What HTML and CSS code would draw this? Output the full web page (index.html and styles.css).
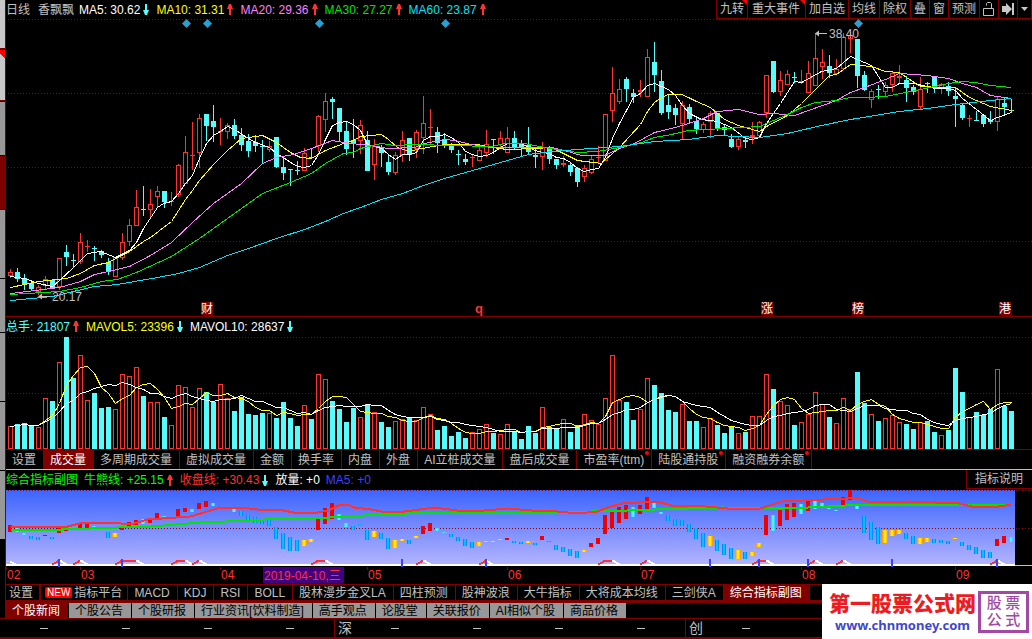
FILE: index.html
```html
<!DOCTYPE html>
<html lang="zh-CN">
<head>
<meta charset="utf-8">
<title>香飘飘 日线</title>
<link rel="stylesheet" href="styles.css">
</head>
<body>
<div class="workspace">
  <aside class="rail">
    <span class="rail-seg light s1"></span>
    <span class="rail-seg light flag s2"></span>
    <span class="rail-seg short"></span>
    <span class="rail-seg short active"></span>
    <span class="rail-seg"></span>
    <span class="rail-seg short"></span>
    <span class="rail-seg"></span>
    <span class="rail-seg"></span>
    <span class="rail-seg"></span>
  </aside>
  <main class="main">
    <header class="topbar">
      <div class="legend">
        <span class="title">日线</span>
        <span class="title name">香飘飘</span>
        <span class="item white">MA5: 30.62<svg class="arrow down" viewBox="0 0 7 11"><path d="M2 0h2v6h2L4 11H2L0 6h2V0z"/></svg></span>
        <span class="item yellow">MA10: 31.31<svg class="arrow up" viewBox="0 0 7 11"><path d="M2 11V5H0L2 0h2l2 5H4v6z"/></svg></span>
        <span class="item pink">MA20: 29.36<svg class="arrow up" viewBox="0 0 7 11"><path d="M2 11V5H0L2 0h2l2 5H4v6z"/></svg></span>
        <span class="item green">MA30: 27.27<svg class="arrow up" viewBox="0 0 7 11"><path d="M2 11V5H0L2 0h2l2 5H4v6z"/></svg></span>
        <span class="item cyan">MA60: 23.87<svg class="arrow up" viewBox="0 0 7 11"><path d="M2 11V5H0L2 0h2l2 5H4v6z"/></svg></span>
      </div>
      <nav class="tools">
        <button class="tool corner">九转</button>
        <button class="tool wide corner">重大事件</button>
        <button class="tool">加自选</button>
        <button class="tool">均线</button>
        <button class="tool">除权</button>
        <button class="tool">叠</button>
        <button class="tool">窗</button>
        <button class="tool">预测</button>
        <button class="tool" aria-label="锁定"><svg width="12" height="14" viewBox="0 0 12 14"><path d="M.5 6.500h10v7H.5zM3.500 3.500v-2l1-1h3l1 1v5" fill="none" stroke="#c0c0c0"/></svg></button>
        <button class="tool" aria-label="最新"><svg width="12" height="12" viewBox="0 0 12 12"><path d="M0 3h4V0l6 6-6 6V9H0zM10 0h2v12h-2z" fill="#c8c8c8"/></svg></button>
        <button class="tool" aria-label="更多"><svg width="7" height="4" viewBox="0 0 7 4"><path d="M0 0h7L3.500 4z" fill="#c8c8c8"/></svg></button>
      </nav>
    </header>
    <svg class="plot price" id="price"></svg>

    <div class="legend sub">
      <span class="item aqua">总手: 21807<svg class="arrow up" viewBox="0 0 7 11"><path d="M2 11V5H0L2 0h2l2 5H4v6z"/></svg></span>
      <span class="item yellow">MAVOL5: 23396<svg class="arrow down" viewBox="0 0 7 11"><path d="M2 0h2v6h2L4 11H2L0 6h2V0z"/></svg></span>
      <span class="item white">MAVOL10: 28637<svg class="arrow down" viewBox="0 0 7 11"><path d="M2 0h2v6h2L4 11H2L0 6h2V0z"/></svg></span>
    </div>
    <svg class="plot volume" id="volume"></svg>

    <nav class="tabs">
      <button class="tab">设置</button>
      <button class="tab selected">成交量</button>
      <button class="tab">多周期成交量</button>
      <button class="tab">虚拟成交量</button>
      <button class="tab">金额</button>
      <button class="tab">换手率</button>
      <button class="tab">内盘</button>
      <button class="tab">外盘</button>
      <button class="tab">AI立桩成交量</button>
      <button class="tab">盘后成交量</button>
      <button class="tab dot">市盈率(ttm)</button>
      <button class="tab dot">陆股通持股</button>
      <button class="tab dot">融资融券余额</button>
    </nav>

    <div class="legend sub second">
      <span class="item lime">综合指标副图</span>
      <span class="item lime">牛熊线: +25.15<svg class="arrow up" viewBox="0 0 7 11"><path d="M2 11V5H0L2 0h2l2 5H4v6z"/></svg></span>
      <span class="item red">收盘线: +30.43<svg class="arrow down" viewBox="0 0 7 11"><path d="M2 0h2v6h2L4 11H2L0 6h2V0z"/></svg></span>
      <span class="item white">放量: +0</span>
      <span class="item blue">MA5: +0</span>
      <button class="explain">指标说明</button>
    </div>
    <svg class="plot indicator" id="indicator"></svg>

    <nav class="tabs templates">
      <button class="tab first">设置</button>
      <button class="tab platform"><span class="new">NEW</span>指标平台</button>
      <button class="tab">MACD</button>
      <button class="tab">KDJ</button>
      <button class="tab">RSI</button>
      <button class="tab">BOLL</button>
      <button class="tab">股林漫步金叉LA</button>
      <button class="tab">四柱预测</button>
      <button class="tab">股神波浪</button>
      <button class="tab">大牛指标</button>
      <button class="tab">大将成本均线</button>
      <button class="tab">三剑侠A</button>
      <button class="tab selected">综合指标副图</button>
    </nav>
    <nav class="news">
      <button class="news-tab selected">个股新闻</button>
      <button class="news-tab">个股公告</button>
      <button class="news-tab">个股研报</button>
      <button class="news-tab">行业资讯[饮料制造]</button>
      <button class="news-tab">高手观点</button>
      <button class="news-tab">论股堂</button>
      <button class="news-tab">关联报价</button>
      <button class="news-tab">AI相似个股</button>
      <button class="news-tab">商品价格</button>
    </nav>
  </main>
</div>
<footer class="ticker">
  <div class="group lead"><i></i><i></i><i></i><i></i></div>
  <div class="group"><b>深</b><i></i><i></i><i></i><i></i></div>
  <div class="group"><b>创</b><i></i></div>
</footer>
<div class="brand">
  <div class="brand-text">
    <strong>第一股票公式网</strong>
    <a href="#">www.chnmoney.com</a>
  </div>
  <div class="seal"><span>股</span><span>票</span><span>公</span><span>式</span></div>
</div>
<script src="chart.js"></script>
</body>
</html>
```

FILE: styles.css
```css
* { box-sizing: border-box; }
body {
  margin: 0;
  min-height: 100vh;
  background: #000;
  color: #c0c0c0;
  font: 12px/16px "Liberation Sans", "Noto Sans CJK SC", sans-serif;
  position: relative;
  overflow-x: hidden;
}
button {
  margin: 0;
  padding: 0;
  border: 0;
  background: none;
  color: inherit;
  font: inherit;
  white-space: nowrap;
  cursor: pointer;
}
svg { flex: none; }
.workspace { display: flex; }
.rail {
  width: 5px;
  flex: none;
  display: flex;
  flex-direction: column;
  gap: 1px;
}
.rail-seg { background: #989898; height: 68px; }
.rail-seg.light { background: #c8c8c8; border-bottom: 1px solid #800000; }
.rail-seg.flag { background: linear-gradient(225deg, #f00 6px, #c8c8c8 6px); }
.rail-seg.short { height: 53px; }
.rail-seg.active { background: #800000; }
.rail-seg.s1 { height: 49px; }
.rail-seg.s2 { height: 51px; }
.main {
  flex: 1;
  min-width: 0;
  display: flex;
  flex-direction: column;
  border-left: 1px solid #800000;
}
.topbar { display: flex; justify-content: space-between; height: 19px; }
.legend { display: flex; align-items: center; gap: 6px; white-space: nowrap; }
.title { color: #c0c0c0; }
.name { margin-left: 2px; margin-right: -1px; }
.item { display: flex; align-items: center; gap: 3px; }
.arrow { width: 7px; height: 11px; }
.up { fill: #ff3232; }
.down { fill: #54fcfc; }
.white { color: #fff; }
.yellow { color: #ff0; }
.pink { color: #ff80ff; }
.green { color: #00e600; }
.cyan { color: #02e2f4; }
.aqua { color: #54fcfc; }
.lime { color: #0f0; }
.red { color: #ff3232; }
.blue { color: #4040ff; }
.tools { display: flex; border-left: 1px solid #800000; border-bottom: 1px solid #800000; }
.tool {
  position: relative;
  display: flex;
  align-items: center;
  padding: 0 3px;
  border-right: 1px solid #800000;
}
.tool.wide { padding: 0 5px 0 4px; }
.corner::after {
  content: "";
  position: absolute;
  top: 0;
  right: 0;
  border-top: 5px solid #f00;
  border-left: 5px solid transparent;
}
.plot { display: block; width: 100%; overflow: hidden; }
.plot text { font: 12px "Liberation Sans", "Noto Sans CJK SC", sans-serif; }
.plot .mark { font-size: 13px; font-weight: bold; }
.price { height: 298px; border-bottom: 1px solid #800000; }
.volume { height: 114px; border-bottom: 1px solid #800000; }
.indicator { height: 94px; }
.sub { height: 19px; }
.second { height: 20px; }
.explain {
  align-self: stretch;
  margin: 0 0 1px auto;
  padding: 0 9px 0 8px;
  border: solid #800000;
  border-width: 0 0 1px 1px;
}
.tabs { display: flex; height: 20px; border-bottom: 1px solid #c0c0c0; }
.tab {
  position: relative;
  display: flex;
  align-items: center;
  padding: 0 7px 0 6px;
  border-right: 1px solid #800000;
}
.tab.selected { background: #800000; color: #fff; }
.dot::after {
  content: "";
  position: absolute;
  top: 1px;
  right: 2px;
  width: 4px;
  height: 4px;
  border-radius: 2px;
  background: #f00;
}
.templates { height: 19px; border-top: 1px solid #800000; border-bottom: 3px solid #800000; }
.tab.first { padding: 0 6px 0 3px; border-right-width: 2px; }
.tab.platform { padding: 0 5px 0 4px; gap: 2px; }
.new {
  padding: 0 2px;
  border-radius: 2px;
  background: #f00;
  color: #fff;
  font-size: 10px;
  line-height: 11px;
}
.news { display: flex; height: 15px; overflow: hidden; }
.news-tab {
  padding: 0 8px 0 6px;
  border-right: 1px solid #000;
  background: #989898;
  color: #000;
}
.news-tab.selected { background: #800000; color: #fff; }
.ticker {
  display: grid;
  grid-template-columns: 335fr 351fr 346fr;
  height: 21px;
  border-top: 1px solid #800000;
  border-bottom: 2px solid #800000;
}
.group { display: flex; align-items: center; padding-left: 3px; border-right: 1px solid #800000; overflow: hidden; }
.group:last-child { border-right: 0; }
.group b { flex: none; width: 16px; font-size: 14px; font-weight: normal; }
.group i { flex: none; width: 82px; height: 1px; background: linear-gradient(#c0c0c0, #c0c0c0) center / 8px 1px no-repeat; }
.brand {
  position: absolute;
  right: 0;
  bottom: 0;
  width: 210px;
  height: 55px;
  padding: 0 3px 0 7px;
  display: flex;
  align-items: center;
  justify-content: space-between;
  background: #fff;
}
.brand-text { display: flex; flex-direction: column; align-items: center; padding-top: 2px; }
.brand strong { color: #ed1c24; font-size: 21px; font-weight: 900; line-height: 24px; white-space: nowrap; }
.brand a { color: #3f48cc; font: bold 13px/18px "Noto Sans", sans-serif; text-decoration: none; }
.seal {
  flex: none;
  width: 51px;
  height: 42px;
  padding: 1px 4px;
  display: grid;
  grid-template-columns: 1fr 1fr;
  place-items: center;
  border: 3px solid #a349a4;
  color: #a349a4;
  font-size: 15px;
  font-weight: 500;
}
```

FILE: chart.js
```js
// Every row: high, body top, body bottom, low; "r" rises (hollow), "c" falls (filled).
const candles = `r269 272 275 278,c268 272 279 282,c274 278 285 290,c283 283 289 290,r285 287 291 295,r276 279 285 290,c280 280 288 288,r258 258 286 290,c245 252 257 266,c254 260 261 268,r233 242 261 264,r240 246 247 252,c246 248 249 261,c250 251 255 258,c258 262 272 275,r257 257 276 277,r233 242 257 260,r219 225 241 246,r190 207 225 225,c186 209 210 216,r189 204 209 217,r186 191 196 207,c191 191 202 208,r192 201 202 206,r164 165 194 197,r136 152 183 183,r122 155 156 170,r114 118 152 168,c114 114 126 141,c105 121 127 142,r118 131 132 145,r123 125 131 139,c119 125 136 139,c128 135 145 151,c134 141 151 157,c135 142 146 152,c140 146 147 164,r141 146 149 152,c137 137 167 168,c156 167 173 180,c169 169 170 186,c161 170 171 175,r148 153 170 170,c149 157 158 158,r115 116 145 152,r93 101 119 132,c97 99 102 119,c108 108 132 141,c122 131 149 155,c119 140 143 158,r120 125 140 154,c131 140 171 171,r139 146 164 180,c145 148 153 167,c154 162 172 175,r152 155 172 175,r131 140 154 162,c138 138 155 161,r130 132 148 158,r96 123 137 154,r109 127 128 144,c127 132 143 153,c133 140 145 148,c143 145 150 153,c150 154 155 165,c154 159 162 165,r154 157 158 167,r146 150 160 160,r130 144 152 157,c139 139 140 154,r131 138 144 147,r127 138 152 152,c131 138 148 150,c140 143 147 157,c127 145 152 154,c149 155 157 168,r142 147 156 170,c146 148 159 164,c159 159 165 169,r156 163 165 167,c163 165 172 176,c167 168 182 187,r165 168 176 182,r155 159 172 174,r146 157 158 164,r114 114 160 160,r67 93 110 122,r79 89 101 104,c77 79 89 102,c89 93 97 103,r80 90 92 97,r49 57 96 96,c42 62 75 92,c70 81 113 115,c95 105 112 119,c104 108 115 125,r101 105 123 140,c104 107 119 124,c117 121 129 134,r122 124 129 133,r111 113 121 138,c113 113 129 131,c125 127 130 135,c134 139 147 148,r137 139 146 150,c136 140 142 148,r122 135 137 144,r121 122 135 138,r75 75 112 118,c61 61 92 93,r71 80 91 96,r70 74 84 84,c72 77 78 83,r70 81 83 84,r61 73 92 92,r33 58 85 85,r49 62 66 79,c55 66 73 78,r59 69 73 74,r33 37 68 69,r32 35 38 53,c39 39 76 88,c71 75 90 91,r89 91 99 108,c85 89 90 99,r82 85 91 96,r72 73 84 92,r65 76 78 83,c76 80 88 102,c85 87 92 95,r77 89 106 109,c82 83 84 93,c76 76 88 93,r83 84 87 94,c82 86 91 96,c88 96 99 127,c104 105 118 120,r115 118 119 127,c111 120 121 121,c115 115 124 127,c111 120 122 124,r97 99 121 131,c98 103 107 114,c99 110 111 113`
  .split(",").map(s => ({ up: s[0] === "r", v: s.slice(1).split(" ").map(Number) }));

const volumeTops = [426,424,423,426,427,398,401,362,337,378,355,400,393,408,407,409,374,376,367,396,402,402,417,425,385,387,407,388,392,402,384,398,411,397,414,415,413,413,418,402,418,426,405,419,374,379,401,409,422,408,417,404,412,422,427,421,419,417,420,407,414,430,426,436,432,438,432,429,424,433,434,424,431,439,426,433,407,427,428,419,432,425,414,420,424,398,355,400,402,420,409,378,385,393,410,412,404,421,421,427,418,425,433,427,433,432,416,416,374,389,401,405,425,422,414,392,404,417,423,398,409,372,403,414,421,418,415,422,424,429,422,421,432,435,430,368,392,417,412,415,409,369,406,411];

// Indicator blocks: R strong, c weak, b bearish, y warning, "-" none.
const blocks = "R525 532,c528 532,c533 535,b536 539,b537 540,R535 536,b537 539,R527 533,R526 531,c528 529,R523 528,R523 528,c526 528,c528 529,b532 538,y533 537,R527 530,R522 527,R520 525,c519 524,R518 523,R513 520,c516 519,c517 519,R509 517,R508 512,c509 512,R503 509,R501 507,c503 506,-,-,c508 512,b511 516,b515 521,b517 523,b519 524,b520 526,b527 539,b533 549,b537 551,b540 551,y540 546,y539 542,R518 530,R508 524,R503 519,c514 520,c523 527,b526 530,b524 525,b530 540,y531 537,b533 539,b538 549,y540 548,y539 541,b540 544,y536 538,R526 534,R523 531,c528 531,c532 533,b534 537,b537 541,b539 546,b542 548,y542 546,y541 542,y541 542,y539 540,R538 540,b541 543,b542 544,y541 543,b543 545,R536 540,b541 542,b545 550,b547 552,b549 556,b551 558,y550 552,R543 547,R538 544,R515 534,R512 528,R507 523,R505 519,c507 517,R505 514,R497 509,c502 508,c512 514,b515 521,b519 526,b520 526,b524 532,b528 539,b533 547,y536 546,b540 551,b544 555,b548 559,y550 559,b552 559,y552 556,y543 547,R515 535,c515 531,R510 526,R504 520,R503 517,c504 514,R501 511,c501 509,c503 507,c508 509,c510 511,R497 505,R490 500,c505 509,b516 533,b522 540,b527 544,y530 543,y530 536,y530 534,b533 539,b536 544,y538 544,y538 542,b539 543,b540 543,b541 544,y538 539,b542 546,b545 550,b547 554,b550 558,b552 558,R539 546,R536 543,c537 542".split(",");

const averages = {
  "#fff": "10,276 24,278 38,283 52,286 59,280 73,267 87,253 100,251 115,257 129,250 136,242 143,228 157,207 163,203 171,201 178,193 185,183 192,175 199,158 206,143 213,135 220,131 227,126 234,129 248,138 255,142 269,147 276,153 283,157 290,162 297,166 304,167 311,165 318,154 325,139 332,125 339,122 346,121 353,124 360,130 367,144 381,148 388,154 395,159 402,154 409,154 416,152 423,140 430,136 437,136 444,134 451,137 458,142 465,151 472,154 479,156 486,155 493,152 500,147 507,143 521,143 528,147 535,150 542,152 549,153 556,157 563,158 570,162 577,168 584,171 591,169 598,168 605,157 612,138 619,123 633,97 640,93 647,85 654,83 661,86 668,89 675,95 682,105 689,113 701,119 717,121 731,127 745,138 752,139 759,137 766,123 780,103 794,81 801,82 821,71 836,68 850,56 871,65 885,87 892,87 899,83 913,83 927,86 934,88 948,88 955,90 962,98 990,120 997,117 1011,112",
  "#ff0": "10,287 38,281 66,278 80,273 94,265 108,262 129,251 143,241 150,237 171,221 185,199 192,190 199,180 213,164 227,150 241,138 262,135 276,142 290,152 300,157 311,158 325,150 343,143 353,140 360,136 381,134 388,139 397,147 409,151 416,149 427,147 444,144 477,144 491,147 507,149 534,148 551,147 563,153 577,160 601,163 605,159 619,147 640,124 647,111 654,102 661,97 668,94 681,94 688,97 696,101 710,107 724,119 738,125 759,131 766,126 787,115 801,103 829,75 836,74 850,64 871,66 885,71 899,72 906,77 920,86 941,87 955,87 969,97 990,106 1011,110",
  "#ff80ff": "10,293 59,287 80,281 94,274 108,271 129,266 150,255 171,242 192,222 213,203 241,183 262,163 276,157 293,154 311,148 332,140 343,142 377,146 387,148 414,147 424,143 444,139 454,140 471,144 491,147 551,147 564,150 581,155 604,155 619,148 634,143 654,132 675,127 688,123 703,118 717,111 738,109 759,114 773,113 794,115 808,110 836,100 850,92 864,87 885,79 899,73 927,75 948,78 962,83 976,87 990,95 1011,98",
  "#00e600": "10,294 59,291 80,287 101,281 117,279 136,272 171,256 199,238 227,218 262,193 290,182 311,173 325,163 343,153 353,152 360,148 381,143 394,145 414,144 491,146 504,143 524,143 544,147 577,152 597,151 619,147 641,142 654,137 671,134 688,130 759,126 787,114 801,107 815,102 836,100 850,97 865,97 885,96 920,89 948,83 962,81 975,82 990,85 1011,87",
  "#02e2f4": "10,300 52,296 94,286 117,284 157,277 178,273 199,267 227,255 248,248 276,238 304,229 325,221 343,213 360,207 381,199 402,193 423,185 444,178 465,172 486,166 507,160 528,154 551,151 577,149 619,146 654,141 688,139 717,135 759,137 787,133 821,125 850,119 899,111 927,108 955,104 990,100 1011,98"
};
const bullLine = "10,529 62,529 117,527 150,526 200,522 250,520 277,518 313,518 344,516 381,514 434,512 564,512 591,511 627,510 655,509 688,508 721,507 788,508 828,506 861,504 975,504 1011,504";
const closeLine = "10,526 63,527 83,522 110,522 130,524 147,519 190,516 220,507 240,507 257,509 278,509 293,512 317,512 328,510 340,504 347,504 354,507 371,509 381,511 404,511 434,507 464,511 484,510 507,508 531,510 557,511 577,513 597,511 607,507 621,503 657,501 671,505 688,505 705,506 738,509 760,508 781,501 845,498 855,497 871,502 908,501 935,502 955,502 971,506 998,506 1011,504";

let scale = 1;
const X = x => Math.round((x - 6) * scale);
const rect = (x, y, w, h, fill) => `<rect x="${x}" y="${y}" width="${w}" height="${h}" fill="${fill}"/>`;
// Four solid edges around a black body keep every stroke exactly one pixel.
const hollow = (x, y, w, h, color) =>
  rect(x, y, w, Math.max(h, 2), color) + (h > 2 ? rect(x + 1, y + 1, w - 2, h - 2, "#000") : "");
const line = (points, color, w = 1) =>
  `<polyline fill="none" stroke="${color}" stroke-width="${w}" shape-rendering="crispEdges" points="${points.split(" ").map(p => {
    const [x, y] = p.split(",").map(Number);
    return `${X(x) + 0.5},${y + 0.5}`;
  }).join(" ")}"/>`;
const dotted = (y, width) =>
  `<line x1="2" x2="${width}" y1="${y + 0.5}" y2="${y + 0.5}" stroke="#900000" stroke-dasharray="1 2" shape-rendering="crispEdges"/>`;
const text = (x, y, s, fill, name = "") => `<text x="${x}" y="${y}" fill="${fill}" class="${name}">${s}</text>`;

function mean(n) {
  return volumeTops.map((_, i) => {
    const part = volumeTops.slice(Math.max(0, i - n + 1), i + 1);
    return `${10 + 7 * i},${Math.round(part.reduce((a, b) => a + b) / part.length)}`;
  }).join(" ");
}

function pointer(x, y) {
  return `<path d="M${x} ${y + 0.5}l4-3v6z" fill="#c0c0c0"/>` + rect(x + 3, y, 9, 1, "#c0c0c0");
}

function drawPrice(w) {
  let s = [19, 93, 167, 241].map(y => dotted(y, w)).join("");
  candles.forEach(({ up, v: [hi, top, bottom, lo] }, i) => {
    const x = X(10 + 7 * i), color = up ? "#ff3232" : "#54fcfc";
    s += rect(x, hi, 1, Math.max(lo - hi, 1), color);
    if (bottom - top <= 2 || !up) s += rect(x - 2, top, 5, Math.max(bottom - top, 1), color);
    else s += hollow(x - 2, top, 5, bottom - top + 1, color);
  });
  for (const [color, points] of Object.entries(averages)) s += line(points, color);
  for (const x of [186, 207, 319, 445, 858]) s += `<path d="M${X(x) + 0.5} 19l4.500 4.500-4.500 4.500-4.500-4.500z" fill="#2a9fd0"/>`;
  s += pointer(X(815), 33) + text(X(829), 38, "38.40", "#c0c0c0");
  s += pointer(X(38), 296) + text(X(52), 301, "20.17", "#c0c0c0");
  for (const [x, c] of [[201, "财"], [761, "涨"], [852, "榜"], [999, "港"]])
    s += rect(X(x), 302, 12, 13, "#800000") + text(X(x), 313, c, "#fff");
  return s + text(X(475), 313, "q", "#ff3232", "mark");
}

function drawVolume(w) {
  let s = dotted(337, w) + dotted(393, w);
  volumeTops.forEach((top, i) => {
    const x = X(10 + 7 * i) - 2;
    s += candles[i].up ? hollow(x, top, 5, 449 - top, "#ff3232") : rect(x, top, 5, 449 - top, "#54fcfc");
  });
  return s + line(mean(5), "#ff0") + line(mean(10), "#fff");
}

function drawIndicator(w) {
  const right = X(1015);
  let s = `<defs><linearGradient id="sky" x2="0" y2="1"><stop stop-color="#3c64ff"/><stop offset="1" stop-color="#b4b4ff"/></linearGradient>
    <linearGradient id="b"><stop stop-color="#0070ff"/><stop offset=".5" stop-color="#00e0ff"/><stop offset="1" stop-color="#0070ff"/></linearGradient>
    <linearGradient id="y"><stop stop-color="#ff8c00"/><stop offset=".5" stop-color="#ffff20"/><stop offset="1" stop-color="#ff8c00"/></linearGradient>
    <linearGradient id="c"><stop stop-color="#30c0ff"/><stop offset=".5" stop-color="#60ffff"/><stop offset="1" stop-color="#30c0ff"/></linearGradient></defs>`;
  s += rect(0, 490, right, 75, "url(#sky)") + dotted(490, w) + dotted(528, w);
  const fills = { R: "#f00000", b: "url(#b)", y: "url(#y)", c: "url(#c)" };
  blocks.forEach((b, i) => {
    if (b === "-") return;
    const [t, e] = b.slice(1).split(" ").map(Number), wide = b[0] === "y" ? 6 : 4;
    s += rect(X(10 + 7 * i) - wide / 2, t, wide, e - t, fills[b[0]]);
  });
  s += line(bullLine, "#00e600", 2) + line(closeLine, "#ff3232", 2);
  s += rect(0, 564, right, 2, "#fff") + rect(right, 565, w - right, 1, "#c0c0c0");
  s += line("10,561 15,564", "#fff", 2);
  for (const [a, b, c, d] of [[52, 59, 59, 66], [73, 80, 80, 87], [115, 122, 136, 143], [171, 178, 185, 192], [192, 199, 199, 206], [311, 318, 325, 332], [416, 423, 423, 430], [479, 486, 486, 492], [598, 605, 612, 619], [640, 647, 647, 654], [752, 759, 766, 773], [808, 815, 815, 822], [836, 843, 843, 850], [990, 997, 997, 1004]])
    s += line(`${a},564 ${b},560 ${c},560`, "#ff3232", 2) + line(`${c},560 ${d},564`, "#fff", 2);
  for (const x of [59, 122, 402, 486, 710, 759, 808, 892, 997]) s += rect(X(x) - 1, 559, 2, 8, "#4040ff");
  for (const [x, m] of [[7, "02"], [81, "03"], [221, "04"], [368, "05"], [508, "06"], [641, "07"], [802, "08"], [956, "09"]])
    s += rect(X(x) - 1, 567, 1, 3, "#800000") + text(X(x), 579, m, "#ff3232");
  s += rect(X(263), 567, 81, 16, "#400080") + text(X(264), 580, "2019-04-10,三", "#ff3232");
  return s;
}

function draw() {
  const w = document.getElementById("price").clientWidth;
  scale = w / 1026;
  for (const [id, top, height, fn] of [["price", 19, 297, drawPrice], ["volume", 336, 113, drawVolume], ["indicator", 490, 94, drawIndicator]]) {
    const svg = document.getElementById(id);
    svg.setAttribute("viewBox", `0 ${top} ${w} ${height}`);
    svg.innerHTML = fn(w);
  }
}
draw();
addEventListener("resize", draw);
```
